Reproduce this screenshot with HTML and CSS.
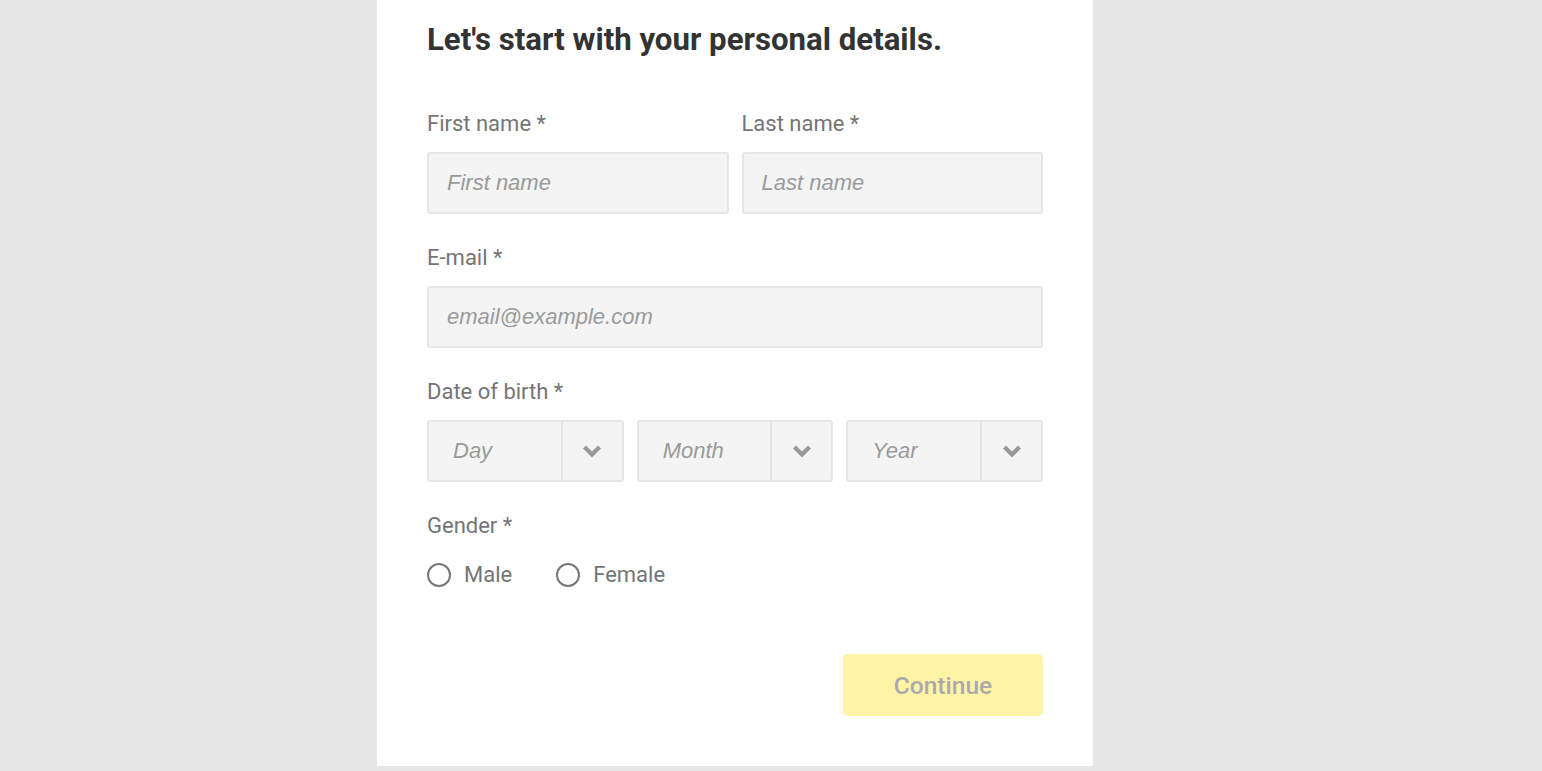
FILE: index.html
```html
<!DOCTYPE html>
<html lang="en">
<head>
<meta charset="utf-8">
<title>Personal details</title>
<link rel="stylesheet" href="styles.css">
</head>
<body>
<main class="card">
  <h1 class="title">Let's start with your personal details.</h1>
  <div class="row two">
    <div class="field">
      <label class="label">First name *</label>
      <input class="input" type="text" placeholder="First name">
    </div>
    <div class="field">
      <label class="label">Last name *</label>
      <input class="input" type="text" placeholder="Last name">
    </div>
  </div>
  <div class="field">
    <label class="label">E-mail *</label>
    <input class="input" type="text" placeholder="email@example.com">
  </div>
  <div class="field">
    <label class="label">Date of birth *</label>
    <div class="selects">
      <div class="select"><span class="sel-text">Day</span><span class="sel-arrow"><svg width="20" height="14" viewBox="0 0 20 14"><path d="M2.5 3 L10 10.5 L17.5 3" fill="none" stroke="#999" stroke-width="4.2"/></svg></span></div>
      <div class="select"><span class="sel-text">Month</span><span class="sel-arrow"><svg width="20" height="14" viewBox="0 0 20 14"><path d="M2.5 3 L10 10.5 L17.5 3" fill="none" stroke="#999" stroke-width="4.2"/></svg></span></div>
      <div class="select"><span class="sel-text">Year</span><span class="sel-arrow"><svg width="20" height="14" viewBox="0 0 20 14"><path d="M2.5 3 L10 10.5 L17.5 3" fill="none" stroke="#999" stroke-width="4.2"/></svg></span></div>
    </div>
  </div>
  <div class="field">
    <label class="label">Gender *</label>
    <div class="radios">
      <span class="radio"><span class="circle"></span>Male</span>
      <span class="radio"><span class="circle"></span>Female</span>
    </div>
  </div>
  <div class="actions">
    <button class="btn" type="button">Continue</button>
  </div>
</main>
</body>
</html>
```
FILE: styles.css
```css
html, body {
  margin: 0;
  padding: 0;
  background: #e7e7e7;
  height: 100%;
}
body {
  font-family: Roboto, "Liberation Sans", sans-serif;
}
.card {
  width: 716px;
  height: 766px;
  box-sizing: border-box;
  margin: 0 0 0 377px;
  background: #fff;
  padding: 20px 50px 0 50px;
}
.title {
  margin: 0;
  font-size: 31.2px;
  line-height: 40px;
  font-weight: 700;
  color: #333;
}
.row.two {
  display: flex;
  gap: 13px;
  margin-top: 19px;
}
.row.two .field {
  flex: 1;
  margin-top: 32px;
}
.field {
  margin-top: 31px;
  display: flex;
  flex-direction: column;
}
.label {
  font-size: 22px;
  line-height: 24px;
  color: #757575;
  padding-top: 1px;
  margin-bottom: 16px;
}
.input {
  height: 62px;
  box-sizing: border-box;
  border: 2px solid #e6e6e6;
  border-radius: 3px;
  background: #f4f4f4;
  padding: 0 18px;
  font-family: "Liberation Sans", Arial, sans-serif;
  font-size: 22px;
  outline: none;
  width: 100%;
}
.input::placeholder {
  color: #9a9a9a;
  font-style: italic;
}
.selects {
  display: flex;
  gap: 13px;
}
.select {
  flex: 1;
  height: 62px;
  box-sizing: border-box;
  border: 2px solid #e6e6e6;
  border-radius: 3px;
  background: #f4f4f4;
  display: flex;
  align-items: stretch;
}
.sel-text {
  flex: 1;
  display: flex;
  align-items: center;
  padding-left: 24px;
  font-family: "Liberation Sans", Arial, sans-serif;
  font-style: italic;
  font-size: 22px;
  color: #9a9a9a;
}
.sel-arrow {
  width: 59px;
  border-left: 2px solid #e6e6e6;
  display: flex;
  align-items: center;
  justify-content: center;
}
.radios {
  display: flex;
  gap: 44px;
  margin-top: 9px;
}
.radio {
  display: flex;
  align-items: center;
  font-size: 22px;
  line-height: 24px;
  color: #757575;
}
.circle {
  width: 24px;
  height: 24px;
  box-sizing: border-box;
  border: 2px solid #777;
  border-radius: 50%;
  margin-right: 13px;
}
.actions {
  display: flex;
  justify-content: flex-end;
  margin-top: 67px;
}
.btn {
  width: 200px;
  height: 62px;
  border: none;
  border-radius: 5px;
  background: #fff4a6;
  color: #aaa;
  font-family: Roboto, "Liberation Sans", sans-serif;
  font-size: 24.5px;
  font-weight: 500;
}
```
